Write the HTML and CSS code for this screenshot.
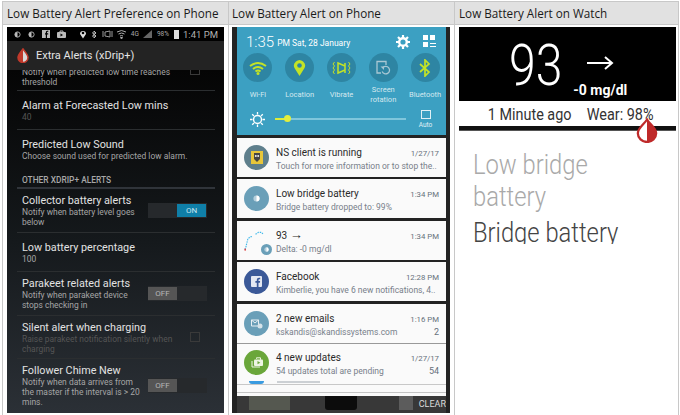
FILE: index.html
```html
<!DOCTYPE html>
<html lang="en">
	<head>
		<meta charset="utf-8"/>
		<meta name="viewport" content="width=device-width, initial-scale=1">
		<link rel="stylesheet" href="styles.css">
		<title>Low Battery Alert</title>
	</head>
	<body>
		<div class="table">
			<div class="head">Low Battery Alert Preference on Phone</div>
			<div class="head col-mid">Low Battery Alert on Phone</div>
			<div class="head">Low Battery Alert on Watch</div>

			<!-- preference screen -->
			<div class="cell">
				<div class="phone prefs">
					<div class="status">
						<span class="status-icons">
							<svg width="7" height="7" viewBox="0 0 8 8"><circle cx="4" cy="4" r="3" fill="none" stroke="#bbb"/><path d="M4 1a3 3 0 0 0 0 6z" fill="#bbb"/></svg>
							<svg width="7" height="7" viewBox="0 0 8 8"><circle cx="4" cy="4" r="3" fill="none" stroke="#bbb"/><path d="M4 1a3 3 0 0 0 0 6z" fill="#bbb"/></svg>
							<svg width="8" height="8" viewBox="0 0 8 8"><rect width="8" height="8" fill="#bbb"/><path d="M5 8V4.500h1.200V3.200H5V2.400q0-.6.6-.6h.7V.8H5.200Q3.800.8 3.800 2.300v.9H3v1.300h.8V8z" fill="#000"/></svg>
							<svg width="9" height="8" viewBox="0 0 9 8"><rect y="2" width="9" height="6" rx="1" fill="#bbb"/><path d="M3 2V1h3v1" fill="none" stroke="#bbb"/><path d="M3.500 3.500v3l2.500-1.500z" fill="#000"/></svg>
						</span>
						<span class="status-icons right">
							<svg width="8" height="10" viewBox="0 0 8 10"><path d="M4 9.500 1 5a3 3 0 1 1 6 0z" fill="#ddd"/><circle cx="4" cy="4" r="1.300" fill="#000"/></svg>
							<svg width="6" height="9" viewBox="0 0 6 9"><path d="M1 2.500 5 6 3 8V1l2 2-4 3.500" fill="none" stroke="#bbb"/></svg>
							<svg width="11" height="8" viewBox="0 0 11 8"><path d="M1 1v6M10 1v6M3 2v4l5 1V1z" fill="none" stroke="#999"/></svg>
							<svg width="9" height="9" viewBox="0 0 9 9"><path d="M0 2q4.500-3 9 0M1.500 4q3-2 6 0M3 6q1.500-1 3 0M4.500 9 3.500 7.500h2z" fill="none" stroke="#aaa"/></svg>
							<span class="tiny">4G</span>
							<svg width="9" height="8" viewBox="0 0 9 8"><path d="M0 8 9 0v8z" fill="#666"/></svg>
							<span class="tiny">98%</span>
							<span class="batt"></span>
							<span class="clock">1:41 PM</span>
						</span>
					</div>
					<div class="actionbar">
						<svg width="12" height="15" viewBox="0 0 12 15"><path d="M6 1C4 4 1 6.500 1 9.500a5 5 0 0 0 10 0C11 6.500 8 4 6 1z" fill="#d8d8d8" stroke="#c0392b" stroke-width="1.500"/><path d="M6 1C4 4 1 6.500 1 9.500a5 5 0 0 0 5 5z" fill="#c0392b"/></svg>
						<span>Extra Alerts (xDrip+)</span>
					</div>
					<div class="list">
						<div class="pref clipped">
							<div class="pref-text wide">
								<div class="sub">Notify when predicted low time reaches threshold</div>
							</div>
							<span class="check"></span>
						</div>
						<div class="pref h39">
							<div class="pref-text wide">
								<div class="title">Alarm at Forecasted Low mins</div>
								<div class="sub dim">40</div>
							</div>
						</div>
						<div class="pref h38 flat">
							<div class="pref-text wide">
								<div class="title">Predicted Low Sound</div>
								<div class="sub">Choose sound used for predicted low alarm.</div>
							</div>
						</div>
						<div class="section">OTHER XDRIP+ ALERTS</div>
						<div class="pref h44">
							<div class="pref-text">
								<div class="title">Collector battery alerts</div>
								<div class="sub">Notify when battery level goes below</div>
							</div>
							<span class="toggle on"><b>ON</b></span>
						</div>
						<div class="pref h39">
							<div class="pref-text wide">
								<div class="title">Low battery percentage</div>
								<div class="sub">100</div>
							</div>
						</div>
						<div class="pref h44">
							<div class="pref-text">
								<div class="title">Parakeet related alerts</div>
								<div class="sub">Notify when parakeet device stops checking in</div>
							</div>
							<span class="toggle"><b>OFF</b></span>
						</div>
						<div class="pref h43">
							<div class="pref-text mid">
								<div class="title">Silent alert when charging</div>
								<div class="sub dim">Raise parakeet notification silently when charging</div>
							</div>
							<span class="check"></span>
						</div>
						<div class="pref last">
							<div class="pref-text">
								<div class="title">Follower Chime New</div>
								<div class="sub">Notify when data arrives from the master if the interval is &gt; 20 mins.</div>
							</div>
							<span class="toggle"><b>OFF</b></span>
						</div>
					</div>
				</div>
			</div>

			<!-- notification shade -->
			<div class="cell col-mid">
				<div class="phone shade">
					<div class="panel">
						<div class="panel-top">
							<span class="time">1:35</span>
							<span class="date">PM Sat, 28 January</span>
							<svg class="gear" width="14" height="14" viewBox="0 0 14 14"><circle cx="7" cy="7" r="3.800" fill="none" stroke="#fff" stroke-width="2.400"/><path d="M7 0v3M7 11v3M0 7h3M11 7h3M2 2l2 2M10 10l2 2M12 2l-2 2M4 10l-2 2" stroke="#fff" stroke-width="2.200"/></svg>
							<svg width="13" height="13" viewBox="0 0 13 13"><path d="M0 0h5v5H0zM7 0h5v5H7zM0 7h5v5H0z" fill="#fff"/><path d="M7 8.500h6M7 11.500h6" stroke="#fff"/></svg>
						</div>
						<div class="toggles">
							<div class="qs">
								<span class="qs-icon"><svg width="18" height="14" viewBox="0 0 18 14"><path d="M1 5q8-6 16 0M4 8q5-4 10 0M6.500 10.500q2.500-2 5 0" fill="none" stroke="#c3e326" stroke-width="2"/><circle cx="9" cy="12.500" r="1.500" fill="#c3e326"/></svg></span>
								<span class="qs-label">Wi-Fi</span>
							</div>
							<div class="qs">
								<span class="qs-icon"><svg width="13" height="18" viewBox="0 0 13 18"><path d="M6.500 17 1.800 9.500a5.500 5.500 0 1 1 9.400 0z" fill="#c3e326"/><circle cx="6.500" cy="6.500" r="2.300" fill="#2e85a3"/></svg></span>
								<span class="qs-label">Location</span>
							</div>
							<div class="qs">
								<span class="qs-icon"><svg width="19" height="14" viewBox="0 0 19 14"><path d="M6 2l7 3v4l-7 3zM13 2v10" fill="none" stroke="#c3e326" stroke-width="1.500"/><path d="M2.500 1l-1.500 2 1.500 2-1.500 2 1.500 2-1.500 2 1.500 2M16.500 1l1.500 2-1.500 2 1.500 2-1.500 2 1.500 2-1.500 2" fill="none" stroke="#c3e326"/></svg></span>
								<span class="qs-label">Vibrate</span>
							</div>
							<div class="qs">
								<span class="qs-icon"><svg width="16" height="16" viewBox="0 0 16 16"><path d="M6 13H2V1.500h9V5" fill="none" stroke="#a9c8d4" stroke-width="1.300"/><path d="M8 7.500a3.800 3.800 0 1 1-.8 4" fill="none" stroke="#a9c8d4" stroke-width="1.300"/><path d="M5.500 6.500h3.500v3.500z" fill="#a9c8d4"/></svg></span>
								<span class="qs-label two">Screen rotation</span>
							</div>
							<div class="qs">
								<span class="qs-icon"><svg width="12" height="18" viewBox="0 0 12 18"><path d="M1 5l9 8-4 4V1l4 4-9 8" fill="none" stroke="#c3e326" stroke-width="1.700"/></svg></span>
								<span class="qs-label">Bluetooth</span>
							</div>
						</div>
						<div class="bright">
							<svg width="15" height="15" viewBox="0 0 15 15"><circle cx="7.500" cy="7.500" r="4" fill="none" stroke="#fff" stroke-width="1.400"/><path d="M7.500 0v2.500M7.500 12.500V15M0 7.500h2.500M12.500 7.500H15M2.200 2.200 4 4M11 11l1.800 1.800M12.800 2.200 11 4M4 11l-1.800 1.800" stroke="#fff" stroke-width="1.300"/></svg>
							<span class="slider"><span class="fill"></span><span class="knob"></span></span>
							<span class="auto"><span class="auto-box"></span>Auto</span>
						</div>
					</div>
					<div class="cards">
						<div class="card">
							<span class="avatar slate"><svg width="12" height="13" viewBox="0 0 12 13"><rect width="12" height="13" fill="#e8c63a"/><path d="M3 2h6v6l-3 3-3-3z" fill="#444"/><circle cx="4.800" cy="5" r="1" fill="#eee"/><circle cx="7.200" cy="5" r="1" fill="#eee"/></svg></span>
							<div class="card-text">
								<div class="card-row"><span class="card-title">NS client is running</span><span class="card-time">1/27/17</span></div>
								<div class="card-row"><span class="card-sub">Touch for more information or to stop the..</span></div>
							</div>
						</div>
						<div class="card">
							<span class="avatar steel"><svg width="7" height="7" viewBox="0 0 8 8"><circle cx="4" cy="4" r="3.500" fill="#fff" fill-opacity=".5"/><path d="M4 .5a3.500 3.500 0 0 1 0 7z" fill="#fff"/></svg></span>
							<div class="card-text">
								<div class="card-row"><span class="card-title">Low bridge battery</span><span class="card-time">1:34 PM</span></div>
								<div class="card-row"><span class="card-sub">Bridge battery dropped to: 99%</span></div>
							</div>
						</div>
						<div class="card">
							<span class="avatar plain">
								<svg width="26" height="26" viewBox="0 0 26 26"><path d="M1 23l1-3 1-4 1-4 2-2 3-1M12 7l3-2 3 0 2 2" fill="none" stroke="#3db8ea" stroke-width="1.200" stroke-dasharray="1.500 1"/><rect x="0.500" y="22" width="1.500" height="2" fill="#d33"/></svg>
								<span class="mini"><svg width="5" height="5" viewBox="0 0 8 8"><circle cx="4" cy="4" r="3.500" fill="#fff" fill-opacity=".5"/><path d="M4 .5a3.500 3.500 0 0 1 0 7z" fill="#fff"/></svg></span>
							</span>
							<div class="card-text">
								<div class="card-row"><span class="card-title">93 <span class="card-arrow">→</span></span><span class="card-time">1:34 PM</span></div>
								<div class="card-row"><span class="card-sub">Delta: -0 mg/dl</span></div>
							</div>
						</div>
						<div class="card">
							<span class="avatar navy"><svg width="11" height="11" viewBox="0 0 11 11"><rect width="11" height="11" rx="1" fill="#e4e8f2"/><path d="M7.500 11V6.800h1.400l.2-1.700H7.500V4q0-.8.800-.8h.9V1.700H8Q5.800 1.700 5.800 3.800v1.300H4.400v1.700h1.400V11z" fill="#3b5998"/></svg></span>
							<div class="card-text">
								<div class="card-row"><span class="card-title">Facebook</span><span class="card-time">12:28 PM</span></div>
								<div class="card-row"><span class="card-sub">Kimberlie, you have 6 new notifications, 4..</span></div>
							</div>
						</div>
						<div class="card">
							<span class="avatar steel"><svg width="12" height="11" viewBox="0 0 12 11"><path d="M.5 2h7v6h-7zM.5 2l3.500 3 3.500-3" fill="none" stroke="#e8eff3"/><circle cx="9" cy="8" r="2.500" fill="#d5e3ea"/></svg></span>
							<div class="card-text">
								<div class="card-row"><span class="card-title">2 new emails</span><span class="card-time">1:16 PM</span></div>
								<div class="card-row"><span class="card-sub">kskandis@skandissystems.com</span><span class="count">2</span></div>
							</div>
						</div>
						<div class="card tight">
							<span class="avatar green"><svg width="12" height="11" viewBox="0 0 12 11"><path d="M1 4v6h8" fill="none" stroke="#eef5e4"/><rect x="3" y="2.500" width="9" height="6.500" rx="1" fill="#eef5e4"/><path d="M5.500 1V0h4v2" fill="none" stroke="#eef5e4" transform="translate(0 .8)"/><path d="M6.500 4v3.300l2.800-1.600z" fill="#6aa63a"/></svg></span>
							<div class="card-text">
								<div class="card-row"><span class="card-title">4 new updates</span><span class="card-time">1/27/17</span></div>
								<div class="card-row"><span class="card-sub">54 updates total are pending</span><span class="count">54</span></div>
							</div>
						</div>
						<div class="peek"><span class="peek-dot"></span><span class="peek-line"></span></div>
						<div class="stub"></div>
						<div class="stub last"></div>
						<div class="shade-foot">
							<span class="tile one"></span>
							<span class="tile two"></span>
							<span class="tile three"></span>
							<span class="clear">CLEAR</span>
						</div>
					</div>
				</div>
			</div>

			<!-- watch face -->
			<div class="cell">
				<div class="watch">
					<div class="face">
						<span class="reading">93</span>
						<div class="trend">
							<svg class="arrow" width="27" height="14" viewBox="0 0 27 14"><path d="M0 7h25M18 1l7 6-7 6" fill="none" stroke="#fff" stroke-width="2"/></svg>
							<span class="delta">-0 mg/dl</span>
						</div>
					</div>
					<div class="ago"><span>1 Minute ago</span><span>Wear: 98%</span></div>
					<div class="rule"></div>
					<svg class="drop" width="22" height="25" viewBox="0 0 24 26"><path d="M12 1C9 6 2 10 2 16a10 9.500 0 0 0 20 0C22 10 15 6 12 1z" fill="#fff" stroke="#bf2a2a" stroke-width="2.500"/><path d="M12 1c3 5 10 9 10 15a10 9.500 0 0 1-10 9.500z" fill="#bf2a2a"/></svg>
					<div class="alert">
						<div class="alert-title">Low bridge battery</div>
						<div class="alert-body">Bridge battery</div>
					</div>
				</div>
			</div>
		</div>
	</body>
</html>
```

FILE: styles.css
```css
* {
	margin: 0;
	padding: 0;
	box-sizing: border-box;
}
body {
	background-color: #ffffff;
	font-family: "Roboto", sans-serif;
	overflow: hidden;
}
.table {
	display: grid;
	grid-template-columns: 226px 226px 224px;
	grid-template-rows: 23px 391px;
	margin: 1px 0 0 2px;
	border-top: 1px solid #c8c8c8;
	border-left: 1px solid #c8c8c8;
	width: 677px;
	height: 414px;
}
.head {
	background-color: #e1e1e1;
	border-right: 1px solid #c8c8c8;
	border-bottom: 1px solid #c8c8c8;
	padding: 3px 0 0 4px;
	font-family: "Open Sans", sans-serif;
	font-size: 11.700px;
	color: #1a1a1a;
	white-space: nowrap;
}
.cell {
	border-right: 1px solid #c8c8c8;
	padding: 2px 0 0 4px;
	overflow: hidden;
}
.col-mid {
	padding-left: 3px;
}
.phone {
	overflow: hidden;
}

/* preference screen */
.prefs {
	width: 217px;
	height: 386px;
	background-color: #000000;
	display: flex;
	flex-direction: column;
}
.status {
	height: 14px;
	flex: none;
	display: flex;
	justify-content: space-between;
	align-items: center;
	padding: 0 6px 0 7px;
	color: #bbbbbb;
}
.status-icons {
	display: flex;
	align-items: center;
	gap: 7px;
}
.status-icons.right {
	gap: 4.500px;
}
.tiny {
	font-size: 6.500px;
	color: #aaaaaa;
}
.batt {
	width: 5px;
	height: 9px;
	background-color: #dddddd;
}
.clock {
	font-size: 9.500px;
	color: #b0b0b0;
}
.actionbar {
	height: 29px;
	flex: none;
	background-color: #232323;
	display: flex;
	align-items: center;
	gap: 7px;
	padding-left: 10px;
	color: #e4e4e4;
	font-size: 11px;
}
.list {
	flex: 1;
	padding: 0 9px 0 10px;
	background: linear-gradient(#050505, #15191c 50%, #2b3036);
	overflow: hidden;
}
.pref {
	display: flex;
	justify-content: space-between;
	align-items: center;
	padding: 0 1px 0 5px;
	border-bottom: 1px solid #2b2e30;
}
.pref.flat {
	border-bottom: none;
}
.pref.last {
	border-bottom: none;
	padding-top: 5px;
}
.clipped {
	height: 21px;
	align-items: flex-end;
}
.clipped .sub {
	padding-bottom: 3px;
}
.clipped .check {
	margin-bottom: 15px;
	height: 5px;
	border-top: none;
}
.h39 {
	height: 39px;
}
.h38 {
	height: 38px;
}
.h43 {
	height: 43px;
}
.h44 {
	height: 44px;
}
.pref-text {
	width: 120px;
	flex: none;
}
.pref-text.mid {
	width: 156px;
}
.pref-text.wide {
	width: 168px;
}
.title {
	font-size: 10.800px;
	line-height: 13px;
	color: #e2e2e2;
	white-space: nowrap;
}
.sub {
	font-size: 8.450px;
	line-height: 10px;
	color: #a6a6a6;
}
.sub.dim {
	color: #555555;
}
.section {
	height: 21px;
	padding: 7px 0 0 5px;
	font-size: 8.400px;
	font-weight: 500;
	line-height: 10px;
	color: #a8a8a8;
	border-bottom: 2px solid #30343a;
}
.check {
	width: 10px;
	height: 10px;
	border: 1px solid #3a3a3a;
	margin-right: 14px;
}
.toggle {
	width: 59px;
	height: 15px;
	background-color: #26292c;
	display: flex;
	flex: none;
	padding: 1px 0;
	margin-right: 7px;
}
.toggle b {
	width: 29px;
	background-color: #555555;
	color: #b5b5b5;
	font-size: 8px;
	font-weight: 400;
	line-height: 13px;
	text-align: center;
}
.toggle.on {
	justify-content: flex-end;
	padding-right: 1px;
}
.toggle.on b {
	background-color: #0f7fa8;
	color: #c9e4ee;
}

/* notification shade */
.shade {
	width: 218px;
	height: 386px;
	background-color: #232323;
	display: flex;
	flex-direction: column;
	padding: 0 4px 0 5px;
}
.panel {
	height: 108px;
	flex: none;
	background-color: #3ca0c2;
	color: #ffffff;
}
.panel-top {
	display: flex;
	align-items: center;
	height: 26px;
	padding: 3px 10px 0 9px;
	gap: 6px;
}
.time {
	font-size: 15px;
	font-weight: 300;
}
.date {
	font-size: 8.500px;
	flex: 1;
	margin-left: -3px;
	padding-top: 3px;
}
.gear {
	margin-right: 7px;
}
.toggles {
	display: flex;
	height: 53px;
}
.qs {
	width: 41.800px;
	display: flex;
	flex-direction: column;
	align-items: center;
}
.qs-icon {
	width: 29px;
	height: 29px;
	flex: none;
	border-radius: 50%;
	background-color: #2e85a3;
	display: flex;
	align-items: center;
	justify-content: center;
}
.qs-label {
	font-size: 7.500px;
	line-height: 10px;
	color: #d4e8ef;
	margin-top: 8px;
	text-align: center;
	white-space: nowrap;
}
.qs-label.two {
	margin-top: 3px;
	white-space: normal;
}
.bright {
	display: flex;
	align-items: center;
	height: 26px;
	padding: 0 0 0 13px;
}
.slider {
	position: relative;
	width: 131px;
	height: 2px;
	margin: 0 12px 0 10px;
	background-color: #7fc6dc;
}
.fill {
	display: block;
	width: 12px;
	height: 2px;
	background-color: #dcec3a;
}
.knob {
	position: absolute;
	left: 9px;
	top: -3px;
	width: 7px;
	height: 7px;
	border-radius: 50%;
	background-color: #e4ee3c;
}
.auto {
	display: flex;
	flex-direction: column;
	align-items: center;
	font-size: 6.500px;
	color: #e0f0f5;
	width: 15px;
	gap: 2px;
}
.auto-box {
	width: 10px;
	height: 9px;
	border: 1px solid #e0f0f5;
	display: block;
}
.cards {
	flex: 1;
	display: flex;
	flex-direction: column;
	padding-top: 2.600px;
	gap: 2.600px;
	overflow: hidden;
}
.card {
	height: 39px;
	flex: none;
	background-color: #fafafa;
	display: flex;
	align-items: center;
	padding: 0 7px;
	gap: 7px;
}
.card.tight {
	border-top: 1px solid #999999;
	margin-top: -2.600px;
	height: 38px;
}
.peek {
	height: 3px;
	flex: none;
	margin-top: -2.600px;
	background-color: #fafafa;
	display: flex;
	gap: 13px;
	padding-left: 12px;
}
.peek-dot {
	width: 15px;
	height: 3px;
	background-color: #3a9be0;
	border-radius: 0 0 8px 8px;
}
.peek-line {
	width: 43px;
	height: 2px;
	background-color: #ccd0d4;
}
.stub {
	height: 8px;
	flex: none;
	margin-top: -2.600px;
	background-color: #fafafa;
	border-top: 1px solid #c8c8c8;
}
.stub.last {
	height: 4px;
	border-top-color: #c4c4c4;
}
.shade-foot {
	flex: 1;
	margin-top: -2.600px;
	background-color: #383838;
	display: flex;
	align-items: flex-start;
}
.tile {
	display: block;
	height: 14px;
	flex: none;
}
.tile.one {
	width: 41px;
	margin-left: 12px;
	background-color: #555850;
}
.tile.two {
	width: 32px;
	margin-left: 35px;
	background-color: #0c0c0c;
	border-radius: 0 0 3px 3px;
}
.tile.three {
	width: 14px;
	margin-left: 42px;
	background-color: #5c5c5c;
}
.clear {
	margin-left: auto;
	font-size: 9px;
	line-height: 17px;
	color: #dcdcdc;
	white-space: nowrap;
}
.avatar {
	position: relative;
	width: 25px;
	height: 25px;
	flex: none;
	border-radius: 50%;
	display: flex;
	align-items: center;
	justify-content: center;
}
.slate {
	background-color: #5f7f8c;
}
.steel {
	background-color: #6a9fb8;
}
.navy {
	background-color: #3b5998;
}
.green {
	background-color: #6aa63a;
}
.plain {
	border-radius: 0;
}
.mini {
	position: absolute;
	right: -3px;
	bottom: -2px;
	width: 11px;
	height: 11px;
	border-radius: 50%;
	background-color: #6a9fb8;
	display: flex;
	align-items: center;
	justify-content: center;
}
.card-text {
	flex: 1;
	min-width: 0;
	display: flex;
	flex-direction: column;
	gap: 2px;
	padding-top: 3px;
}
.card-row {
	display: flex;
	justify-content: space-between;
	align-items: baseline;
	white-space: nowrap;
}
.card-title {
	font-size: 10px;
	line-height: 12px;
	color: #2a2a2a;
}
.card-arrow {
	font-size: 13px;
	line-height: 12px;
}
.card-sub {
	font-size: 8.500px;
	line-height: 10px;
	color: #78808a;
}
.card-time {
	font-size: 7.800px;
	color: #66707a;
}
.count {
	font-size: 9px;
	color: #66707a;
}

/* watch face */
.watch {
	position: relative;
	width: 217px;
}
.face {
	height: 74px;
	background-color: #000000;
	color: #ffffff;
	display: flex;
	padding-left: 50px;
}
.reading {
	flex: 0 0 62px;
	font-size: 58px;
	font-weight: 300;
	line-height: 76px;
	transform: scaleX(.83);
	transform-origin: left;
}
.trend {
	display: flex;
	flex-direction: column;
	padding-top: 29px;
}
.arrow {
	margin-left: 14px;
}
.delta {
	font-size: 14px;
	font-weight: 700;
	white-space: nowrap;
	line-height: 15px;
	margin-top: 13px;
}
.ago {
	display: flex;
	gap: 17px;
	padding: 5px 0 0 32px;
	font-size: 16px;
	line-height: 18px;
	color: #333333;
	white-space: nowrap;
	transform: scaleX(.9);
	transform-origin: left;
}
.rule {
	height: 4.500px;
	margin-top: 2px;
	background-color: #111111;
	border-bottom: 1px solid #555555;
}
.drop {
	position: absolute;
	left: 177px;
	top: 91px;
}
.alert {
	padding: 18px 14px 0;
	height: 113px;
	overflow: hidden;
}
.alert-title {
	font-size: 27px;
	font-weight: 300;
	line-height: 32px;
	color: #a9a9a9;
	width: 140px;
	transform: scaleX(.88);
	transform-origin: left;
}
.alert-body {
	font-size: 27px;
	font-weight: 300;
	line-height: 32px;
	color: #444444;
	margin-top: 4px;
	white-space: nowrap;
	transform: scaleX(.88);
	transform-origin: left;
}
```
